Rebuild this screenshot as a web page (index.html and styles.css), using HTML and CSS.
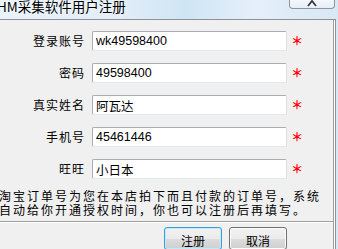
FILE: index.html
```html
<!DOCTYPE html>
<html lang="zh-CN">
<head>
    <meta charset="UTF-8">
    <meta name="viewport" content="width=device-width, initial-scale=1.0">
    <link rel="stylesheet" href="styles.css">
    <title>HM采集软件用户注册</title>
</head>
<body>
    <div class="window">
        <div class="titlebar">
            <span class="title">HM采集软件用户注册</span>
            <div class="close">
                <svg width="14" height="7" viewBox="0 0 14 7">
                    <path d="M3 6 L7 1 L11 6" fill="none" stroke="#ffffff" stroke-width="4"/>
                    <path d="M3 6 L7 1 L11 6" fill="none" stroke="#3a3f47" stroke-width="2"/>
                </svg>
            </div>
        </div>
        <div class="frame">
            <div class="client">
                <div class="form">
                    <label class="label">登录账号</label>
                    <input type="text" class="field" value="wk49598400">
                    <span class="req">＊</span>

                    <label class="label">密码</label>
                    <input type="text" class="field" value="49598400">
                    <span class="req">＊</span>

                    <label class="label">真实姓名</label>
                    <input type="text" class="field" value="阿瓦达">
                    <span class="req">＊</span>

                    <label class="label">手机号</label>
                    <input type="text" class="field" value="45461446">
                    <span class="req">＊</span>

                    <label class="label">旺旺</label>
                    <input type="text" class="field" value="小日本">
                    <span class="req">＊</span>
                </div>
                <p class="note">淘宝订单号为您在本店拍下而且付款的订单号，系统<br>自动给你开通授权时间，你也可以注册后再填写。</p>
                <div class="sep"></div>
                <div class="buttons">
                    <button class="btn btn-default">注册</button>
                    <button class="btn">取消</button>
                </div>
            </div>
        </div>
    </div>
</body>
</html>
```

FILE: styles.css
```css
body{
    margin: 0;
    padding: 0;
    width: 338px;
    height: 249px;
    overflow: hidden;
    font-family: "Noto Sans CJK SC", sans-serif;
}
.window{
    width: 338px;
    height: 249px;
    background: linear-gradient(90deg, #eaf2fa 0%, #e2edf8 35%, #cfe5f4 55%, #e4eff9 75%, #d8e8f5 100%);
}
.titlebar{
    height: 19px;
    display: flex;
    justify-content: space-between;
    align-items: flex-start;
}
.title{
    margin-left: -3px;
    font-size: 13.5px;
    line-height: 13px;
    color: #000;
    white-space: nowrap;
    text-shadow: 0 0 4px #ffffff;
}
.close{
    width: 44px;
    height: 8px;
    margin-right: 3px;
    border: 1px solid #8a96a4;
    border-top: none;
    border-radius: 0 0 4px 4px;
    background: linear-gradient(#f4f8fc, #e6eef6);
    display: flex;
    justify-content: center;
    align-items: flex-start;
}
.frame{
    width: 335px;
    border-top: 1px solid #8e9296;
    border-right: 1px solid #8e9296;
    background-color: #ffffff;
}
.client{
    width: 333px;
    height: 229px;
    border-right: 1px solid #a0a0a0;
    background-color: #f0f0f0;
}
.form{
    display: grid;
    grid-template-columns: 85px 195px auto;
    column-gap: 7px;
    row-gap: 12px;
    padding-top: 11px;
    align-items: center;
}
.label{
    text-align: right;
    font-size: 12px;
    letter-spacing: 1px;
    line-height: 14px;
    color: #000;
    white-space: nowrap;
}
.field{
    box-sizing: border-box;
    width: 195px;
    height: 20px;
    margin: 0;
    padding: 0 0 0 3px;
    border: 1px solid;
    border-color: #abadb3 #dbdfe6 #e3e9ef #abadb3;
    border-radius: 2px;
    background-color: #ffffff;
    font-family: "Liberation Sans", "Noto Sans CJK SC", sans-serif;
    font-size: 12.5px;
    color: #000;
    outline: none;
}
.req{
    margin-left: -3px;
    color: #ff0000;
    font-size: 12px;
    font-weight: bold;
    line-height: 12px;
}
.note{
    margin: 10px 0 0 -1px;
    font-size: 12px;
    line-height: 14px;
    letter-spacing: 2px;
    white-space: nowrap;
    color: #000;
}
.sep{
    margin-top: 4px;
    border-top: 1px solid #a0a0a0;
    border-bottom: 1px solid #ffffff;
}
.buttons{
    display: flex;
    justify-content: flex-end;
    gap: 7px;
    margin-top: 4px;
    padding-right: 46px;
}
.btn{
    box-sizing: border-box;
    width: 58px;
    height: 23px;
    padding: 4px 0 0 0;
    border: 1px solid #707070;
    border-radius: 3px;
    background: linear-gradient(#f2f2f2 0%, #ebebeb 50%, #dddddd 50%, #cfcfcf 100%);
    box-shadow: inset 0 0 0 1px #fcfcfc;
    font-family: "Noto Sans CJK SC", sans-serif;
    font-size: 12px;
    line-height: 16px;
    color: #000;
}
.btn-default{
    border-color: #3c9fd8;
    box-shadow: inset 0 0 0 1px #bfeafb;
}
```
